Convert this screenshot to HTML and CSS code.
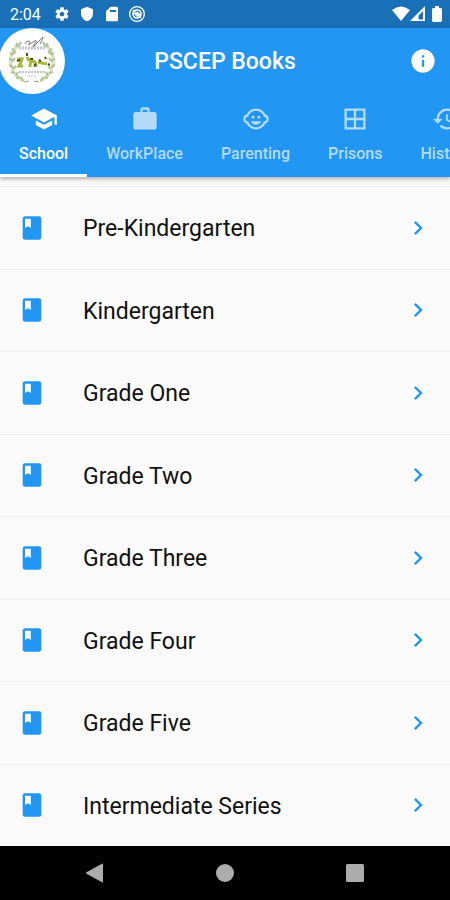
FILE: index.html
```html
<!DOCTYPE html>
<html lang="en">
<head>
<meta charset="utf-8">
<meta name="viewport" content="width=device-width, initial-scale=1">
<title>PSCEP Books</title>
<link rel="stylesheet" href="styles.css">
</head>
<body>
<svg class="defs" aria-hidden="true">
  <symbol id="book" viewBox="0 0 24 24"><path d="M18 2H6c-1.100 0-2 .9-2 2v16c0 1.100.9 2 2 2h12c1.100 0 2-.9 2-2V4c0-1.100-.9-2-2-2zM6 4h5v8l-2.500-1.500L6 12V4z"/></symbol>
  <symbol id="chevron" viewBox="0 0 24 24"><path d="M8.590 16.590L13.170 12 8.590 7.410 10 6l6 6-6 6z"/></symbol>
</svg>
<div class="status">
  <span class="time">2:04</span>
  <div class="notices">
    <svg class="small" viewBox="0 0 24 24"><path d="M19.430 12.980c.04-.32.07-.64.07-.98s-.03-.66-.07-.98l2.110-1.650c.19-.15.24-.42.12-.64l-2-3.460c-.12-.22-.39-.3-.61-.22l-2.490 1c-.52-.4-1.080-.73-1.690-.98l-.38-2.650C14.460 2.180 14.250 2 14 2h-4c-.25 0-.46.18-.49.42l-.38 2.650c-.61.25-1.170.59-1.690.98l-2.490-1c-.23-.09-.49 0-.61.22l-2 3.460c-.13.22-.07.49.12.64l2.110 1.650c-.04.32-.07.65-.07.98s.03.66.07.98l-2.110 1.650c-.19.15-.24.42-.12.64l2 3.460c.12.22.39.3.61.22l2.490-1c.52.4 1.080.73 1.690.98l.38 2.650c.03.24.24.42.49.42h4c.25 0 .46-.18.49-.42l.38-2.650c.61-.25 1.170-.59 1.690-.98l2.490 1c.23.09.49 0 .61-.22l2-3.460c.12-.22.07-.49-.12-.64l-2.110-1.650zM12 15.500c-1.930 0-3.500-1.570-3.500-3.500s1.570-3.500 3.500-3.500 3.500 1.570 3.500 3.500-1.570 3.500-3.500 3.500z"/></svg>
    <svg class="small" viewBox="0 0 24 24"><path d="M12 1L3 5v6c0 5.550 3.840 10.740 9 12 5.160-1.260 9-6.450 9-12V5l-9-4z"/></svg>
    <svg class="small" viewBox="0 0 24 24"><path d="M19 1h-9L3 8v13c0 1.100.9 2 2 2h14c1.100 0 2-.9 2-2V3c0-1.100-.9-2-2-2zM9 9V6h9v3z"/></svg>
    <svg class="small" viewBox="0 0 24 24"><g fill="none" stroke="#fff" stroke-width="2"><circle cx="12" cy="12" r="11"/><circle cx="12" cy="12" r="6" stroke-width="2.500"/><path d="M6 6l12 12M12 9l5 5M8 11l5 5"/></g></svg>
  </div>
  <svg class="wifi" viewBox="0 0 18 16"><path d="M0 4Q9-3 18 4L9 15z"/></svg>
  <svg class="signal" viewBox="0 0 16 16"><path fill-rule="evenodd" d="M0 15L15 0v15zM8.500 13.500h4.500V5L8.500 9.500z"/></svg>
  <svg class="battery" viewBox="0 0 10 16"><path d="M3 0h4v2h2l1 1v12l-1 1H1l-1-1V3l1-1h2z"/></svg>
</div>
<header class="appbar">
  <div class="titlebar">
    <svg class="logo" viewBox="0 0 66 66" role="img" aria-label="PSCEP logo">
      <circle cx="33" cy="33" r="33" fill="#fff"/>
      <g fill="none">
        <path d="M21 16Q9 25 12 37T25 53M45 16Q57 25 54 37T41 53" stroke="#dbe3c9" stroke-width="3"/>
        <path d="M18 15l-1 4M22 14l-3 5M14 20l1 4M11 25l3 2M17 23l-4 4M10 31l4 1M16 30l-3 4M10 37l4 2M17 38l-3 3M12 44l4 1M19 44l-2 4M17 50l4-1M22 49l2 4" stroke="#b2c290" stroke-width="2"/>
        <path d="M48 15l1 4M44 14l3 5M52 20l-1 4M55 25l-3 2M49 23l4 4M56 31l-4 1M50 30l3 4M56 37l-4 2M49 38l3 3M54 44l-4 1M47 44l2 4M49 50l-4-1M44 49l-2 4" stroke="#b2c290" stroke-width="2"/>
        <path d="M26 16q2-4 4-3t0 3 4-2 1 3 4-3 2 2" stroke="#777" stroke-width="1"/>
        <path d="M20 20h27" stroke="#c2c6de" stroke-width="3" stroke-dasharray="2 1"/>
        <path d="M18 31h5l-1 3-2 4h4M28 29l2 4M31 39q0-7 3-6t3 6M39 34l4 1 5 1" stroke="#a9b735" stroke-width="3"/>
        <path d="M28 25v3M18 33l3-1M31 31h3M35 38l2-2M40 32l2 1M46 29l1 2M49 36l2 1" stroke="#465020" stroke-width="2"/>
        <path d="M20 44h26" stroke="#b7c4dc" stroke-width="2" stroke-dasharray="2 1"/>
        <path d="M28 48h9" stroke="#ccd5e2" stroke-width="2" stroke-dasharray="1 1"/>
        <path d="M25 54l5-1m5 0l5 1" stroke="#969b86" stroke-width="1"/>
      </g>
    </svg>
    <h1>PSCEP Books</h1>
    <button class="info" aria-label="Information"><svg class="icon" viewBox="0 0 24 24"><path d="M12 2C6.480 2 2 6.480 2 12s4.480 10 10 10 10-4.480 10-10S17.520 2 12 2zm1 15h-2v-6h2v6zm0-8h-2V7h2v2z"/></svg></button>
  </div>
  <nav class="tabs" aria-label="Categories">
    <button class="tab active"><svg class="icon" viewBox="0 0 24 24"><path d="M5 13.180v4L12 21l7-3.820v-4L12 17l-7-3.820zM12 3L1 9l11 6 9-4.910V17h2V9L12 3z"/></svg><span>School</span></button>
    <button class="tab"><svg class="icon" viewBox="0 0 24 24"><path d="M20 6h-4V4c0-1.110-.89-2-2-2h-4c-1.110 0-2 .89-2 2v2H4c-1.110 0-1.990.89-1.990 2L2 19c0 1.110.89 2 2 2h16c1.110 0 2-.89 2-2V8c0-1.110-.89-2-2-2zm-6 0h-4V4h4v2z"/></svg><span>WorkPlace</span></button>
    <button class="tab"><svg class="icon" viewBox="0 0 24 24"><circle cx="14.500" cy="10.500" r="1.250"/><circle cx="9.500" cy="10.500" r="1.250"/><path d="M22.940 12.660c.04-.21.06-.43.06-.66s-.02-.45-.06-.66c-.25-1.510-1.360-2.740-2.810-3.170-.53-1.120-1.280-2.100-2.190-2.910C16.360 3.850 14.280 3 12 3s-4.360.85-5.940 2.260c-.92.81-1.670 1.800-2.190 2.910-1.450.43-2.560 1.650-2.810 3.170-.04.21-.06.43-.06.66s.02.45.06.66c.25 1.510 1.360 2.740 2.810 3.170.52 1.110 1.270 2.090 2.170 2.890C7.620 20.140 9.710 21 12 21s4.380-.86 5.970-2.280c.9-.8 1.650-1.790 2.170-2.890 1.440-.43 2.550-1.650 2.800-3.170zM19 14c-.1 0-.19-.02-.29-.03-.2.67-.49 1.290-.86 1.860C16.600 17.740 14.450 19 12 19s-4.600-1.260-5.850-3.170c-.37-.57-.66-1.190-.86-1.860-.1.010-.19.030-.29.030-1.100 0-2-.9-2-2s.9-2 2-2c.1 0 .19.020.29.030.2-.67.49-1.290.86-1.860C7.400 6.260 9.550 5 12 5s4.600 1.260 5.850 3.170c.37.57.66 1.190.86 1.860.1-.01.19-.03.29-.03 1.100 0 2 .9 2 2s-.9 2-2 2zM7.500 14c.76 1.770 2.490 3 4.500 3s3.740-1.230 4.500-3h-9z"/></svg><span>Parenting</span></button>
    <button class="tab"><svg class="icon" viewBox="0 0 24 24"><path d="M3 3v18h18V3H3zm8 16H5v-6h6v6zm0-8H5V5h6v6zm8 8h-6v-6h6v6zm0-8h-6V5h6v6z"/></svg><span>Prisons</span></button>
    <button class="tab"><svg class="icon" viewBox="0 0 24 24"><path d="M13 3c-4.970 0-9 4.030-9 9H1l3.890 3.890.07.14L9 12H6c0-3.870 3.130-7 7-7s7 3.130 7 7-3.130 7-7 7c-1.930 0-3.680-.79-4.940-2.060l-1.420 1.420C8.270 19.990 10.510 21 13 21c4.970 0 9-4.030 9-9s-4.030-9-9-9zm-1 5v5l4.280 2.540.72-1.210-3.500-2.080V8H12z"/></svg><span>History</span></button>
  </nav>
</header>
<main class="list">
  <a class="row" href="#"><svg class="icon"><use href="#book"/></svg><span>Pre-Kindergarten</span><svg class="icon"><use href="#chevron"/></svg></a>
  <a class="row" href="#"><svg class="icon"><use href="#book"/></svg><span>Kindergarten</span><svg class="icon"><use href="#chevron"/></svg></a>
  <a class="row" href="#"><svg class="icon"><use href="#book"/></svg><span>Grade One</span><svg class="icon"><use href="#chevron"/></svg></a>
  <a class="row" href="#"><svg class="icon"><use href="#book"/></svg><span>Grade Two</span><svg class="icon"><use href="#chevron"/></svg></a>
  <a class="row" href="#"><svg class="icon"><use href="#book"/></svg><span>Grade Three</span><svg class="icon"><use href="#chevron"/></svg></a>
  <a class="row" href="#"><svg class="icon"><use href="#book"/></svg><span>Grade Four</span><svg class="icon"><use href="#chevron"/></svg></a>
  <a class="row" href="#"><svg class="icon"><use href="#book"/></svg><span>Grade Five</span><svg class="icon"><use href="#chevron"/></svg></a>
  <a class="row" href="#"><svg class="icon"><use href="#book"/></svg><span>Intermediate Series</span><svg class="icon"><use href="#chevron"/></svg></a>
</main>
<footer class="sysnav">
  <button aria-label="Back"><svg viewBox="0 0 20 20"><path d="M1.500 9.200L17 .7q1-.5 1 .6v17.400q0 1.100-1 .6L1.500 10.800q-1.200-.8 0-1.600z"/></svg></button>
  <button aria-label="Home"><svg viewBox="0 0 20 20"><circle cx="10" cy="10" r="9"/></svg></button>
  <button aria-label="Recent apps"><svg viewBox="0 0 20 20"><rect x="1" y="1" width="18" height="18" rx="1.500"/></svg></button>
</footer>
</body>
</html>
```
FILE: styles.css
```css
* { box-sizing: border-box; }
body {
  margin: 0;
  min-height: 100vh;
  display: flex;
  flex-direction: column;
  background: #fafafa;
  font-family: Roboto, "Liberation Sans", sans-serif;
  overflow-x: hidden;
}
.defs { display: none; }
svg { display: block; flex: none; fill: currentColor; }
button {
  border: 0;
  margin: 0;
  padding: 0;
  background: none;
  color: inherit;
  font: inherit;
  cursor: pointer;
}
.icon { width: 28px; height: 28px; }

.status {
  height: 28px;
  padding: 0 8px 0 10px;
  display: flex;
  align-items: center;
  background: #1970b6;
  color: #fff;
}
.time { font-size: 16px; line-height: 28px; padding-top: 2px; }
.notices { display: flex; gap: 9px; margin: 0 auto 0 13px; }
.small { width: 16px; height: 16px; }
.wifi { width: 18px; height: 16px; }
.signal { width: 16px; height: 16px; margin-right: 6px; }
.battery { width: 10px; height: 16px; }

.appbar {
  position: relative;
  background: #2196f3;
  color: #fff;
  box-shadow: 0 2px 4px rgba(0, 0, 0, .3);
}
.titlebar {
  height: 65px;
  display: grid;
  grid-template-columns: 65px 1fr 65px;
  align-items: center;
}
.logo { width: 66px; height: 66px; margin-left: -1px; }
h1 {
  margin: 0;
  padding-top: 2px;
  font-size: 23px;
  line-height: 28px;
  font-weight: 500;
  text-align: center;
}
.info { justify-self: center; margin-left: 10px; }
.tabs { display: flex; overflow: hidden; }
.tab {
  flex: none;
  height: 84px;
  padding: 12px 19px 0;
  border-bottom: 3px solid transparent;
  display: flex;
  flex-direction: column;
  align-items: center;
  justify-content: flex-start;
  gap: 11px;
  font-size: 16px;
  line-height: 20px;
  font-weight: 500;
  color: #b5dbfb;
}
.tab.active { color: #fff; border-bottom-color: #fff; }

.list {
  flex: 1;
  padding-top: 9px;
  display: grid;
  grid-auto-rows: 1fr;
}
.row {
  min-height: 64px;
  padding: 0 18px;
  display: flex;
  align-items: center;
  gap: 37px;
  border-top: 1px solid #f0f0f0;
  color: #2196f3;
  text-decoration: none;
}
.row span { flex: 1; padding-top: 3px; color: #111; font-size: 23px; line-height: 28px; }

.sysnav {
  height: 54px;
  display: flex;
  align-items: center;
  justify-content: center;
  background: #000;
  color: #acacac;
}
.sysnav button { width: 130px; height: 54px; display: grid; place-items: center; }
.sysnav svg { width: 20px; height: 20px; }
```
